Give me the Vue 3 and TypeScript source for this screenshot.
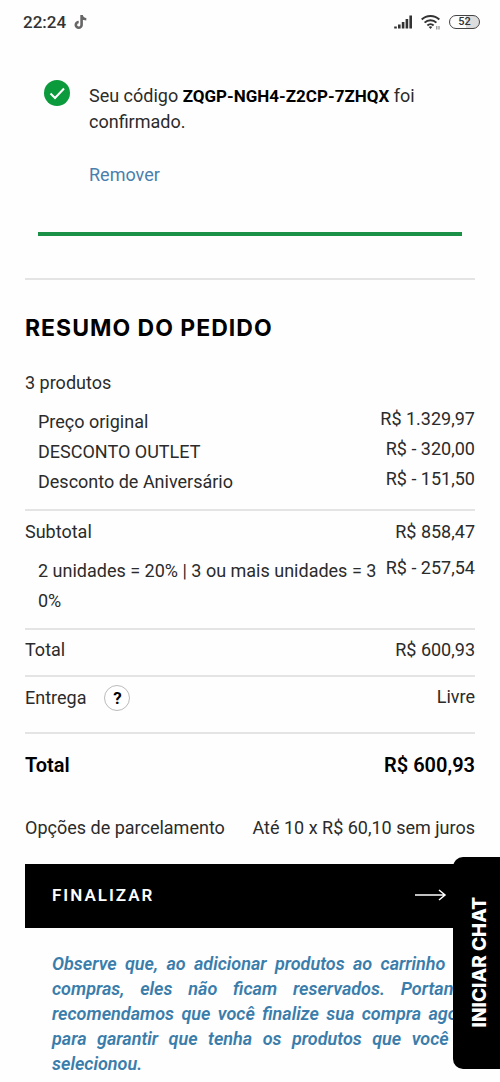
<script setup lang="ts">
interface SummaryRow {
  label: string
  value: string
}

const voucherCode = 'ZQGP-NGH4-Z2CP-7ZHQX'

const prices: SummaryRow[] = [
  { label: 'Preço original', value: 'R$ 1.329,97' },
  { label: 'DESCONTO OUTLET', value: 'R$ - 320,00' },
  { label: 'Desconto de Aniversário', value: 'R$ - 151,50' },
]

const noteLines: string[] = [
  'Observe que, ao adicionar produtos ao carrinho de',
  'compras, eles não ficam reservados. Portanto,',
  'recomendamos que você finalize sua compra agora',
  'para garantir que tenha os produtos que você já',
  'selecionou.',
]
</script>

<template>
  <div class="page">
    <header class="status">
      <div class="status-side">
        <span class="clock">22:24</span>
        <svg class="note-icon" viewBox="0 0 14 16" aria-hidden="true">
          <path d="M7.6 1v9.9a2.9 2.9 0 1 1-2.9-2.9M7.6 1.2c.3 2.300 2 3.900 4.700 4" fill="none" stroke="#666" stroke-width="2.600" />
        </svg>
      </div>
      <div class="status-side">
        <svg class="signal-icon" viewBox="0 0 20 14" aria-hidden="true">
          <path d="M2.500 11.500v2M6.300 9.500v4M10.100 7v6.500M13.900 4v9.500M17.700 .5v13" fill="none" stroke="#333" stroke-width="2.600" />
        </svg>
        <svg class="wifi-icon" viewBox="0 0 20 16" aria-hidden="true">
          <g fill="none" stroke="#333" stroke-width="2">
            <path d="M.7 5.500a12.500 12.500 0 0 1 17.600 0" />
            <path d="M3.600 8.600a8.500 8.500 0 0 1 11.800 0" />
            <path d="M6.400 11.500a4.500 4.500 0 0 1 6.200 0" />
          </g>
          <path d="M7.800 13l1.700 2 1.700-2a2.500 2.500 0 0 0-3.400 0z" fill="#333" />
          <path d="M15.800 12v3.500M18 15.500v-3.500" fill="none" stroke="#777" />
        </svg>
        <span class="battery">52</span>
      </div>
    </header>

    <main class="content">
      <section class="notice">
        <svg class="check-icon" viewBox="0 0 26 26" aria-hidden="true">
          <circle cx="13" cy="13" r="13" fill="#0b9a3c" />
          <path d="M6.500 13.500l4.500 4.500 9-9.500" fill="none" stroke="#fff" stroke-width="2" />
        </svg>
        <div class="notice-body">
          <p class="notice-text">Seu código <strong>{{ voucherCode }}</strong> foi confirmado.</p>
          <a class="remove" href="#">Remover</a>
        </div>
      </section>

      <section class="summary">
        <h1 class="title">RESUMO DO PEDIDO</h1>
        <p class="count">3 produtos</p>

        <dl class="group prices">
          <div v-for="row in prices" :key="row.label" class="row nested">
            <dt>{{ row.label }}</dt>
            <dd>{{ row.value }}</dd>
          </div>
        </dl>

        <dl class="group subtotal">
          <div class="row">
            <dt>Subtotal</dt>
            <dd>R$ 858,47</dd>
          </div>
          <div class="row nested">
            <dt>2 unidades = 20% | 3 ou mais unidades = 3<br>0%</dt>
            <dd>R$ - 257,54</dd>
          </div>
        </dl>

        <dl class="group partial">
          <div class="row">
            <dt>Total</dt>
            <dd>R$ 600,93</dd>
          </div>
        </dl>

        <dl class="group delivery">
          <div class="row">
            <dt class="delivery-label">
              Entrega
              <button class="help" type="button" aria-label="Ajuda sobre a entrega">?</button>
            </dt>
            <dd>Livre</dd>
          </div>
        </dl>

        <dl class="group final">
          <div class="row grand">
            <dt>Total</dt>
            <dd>R$ 600,93</dd>
          </div>
          <div class="row">
            <dt>Opções de parcelamento</dt>
            <dd>Até 10 x R$ 60,10 sem juros</dd>
          </div>
        </dl>
      </section>

      <button class="checkout" type="button">
        <span>FINALIZAR</span>
        <svg class="arrow" viewBox="0 0 32 12" aria-hidden="true">
          <path d="M0 6h30M24 1l6 5-6 5" fill="none" stroke="#fff" stroke-width="1.500" />
        </svg>
      </button>

      <p class="reserve-note">
        <span v-for="line in noteLines" :key="line" class="note-line">{{ line }}</span>
      </p>
    </main>

    <button class="chat" type="button"><span class="chat-label">INICIAR CHAT</span></button>
  </div>
</template>

<style>
body {
  background: #fefefe;
}
</style>

<style scoped>
.page {
  font-family: Roboto, "Liberation Sans", sans-serif;
  font-size: 18px;
  line-height: 24px;
  color: #2b2b2b;
  overflow-x: hidden;
}

p,
h1,
dl,
dd {
  margin: 0;
}

button {
  font-family: inherit;
  border: 0;
  padding: 0;
  cursor: pointer;
}

.status {
  display: flex;
  justify-content: space-between;
  align-items: center;
  height: 44px;
  padding: 0 20px 0 23px;
}

.status-side {
  display: flex;
  align-items: center;
  gap: 8px;
}

.clock {
  font-size: 17px;
  font-weight: 500;
  color: #333;
}

.note-icon {
  width: 14px;
  height: 16px;
}

.signal-icon {
  width: 20px;
  height: 14px;
}

.wifi-icon {
  width: 20px;
  height: 16px;
}

.battery {
  box-sizing: border-box;
  width: 31px;
  height: 14px;
  border: 1px solid #444;
  border-radius: 7px;
  background: linear-gradient(90deg, #fefefe 55%, #ddd 55%);
  color: #333;
  font-size: 11px;
  font-weight: 500;
  line-height: 12px;
  text-align: center;
}

.content {
  padding: 0 25px;
}

.notice {
  display: flex;
  align-items: flex-start;
  gap: 19px;
  margin: 36px 13px 42px;
  padding: 0 6px 45px;
  border-bottom: 4px solid #1b9148;
}

.check-icon {
  flex: none;
  width: 26px;
  height: 26px;
}

.notice-body {
  padding-top: 3px;
  line-height: 25px;
}

.notice-text strong {
  font-size: 17px;
  color: #000;
}

.remove {
  display: inline-block;
  margin-top: 28px;
  color: #4a7fad;
  text-decoration: none;
}

.summary {
  border-top: 2px solid #e4e4e4;
  padding-top: 33px;
}

.title {
  font-family: Inter, "Liberation Sans", sans-serif;
  font-size: 23px;
  font-weight: 700;
  line-height: 30px;
  letter-spacing: 1px;
  color: #000;
}

.count {
  margin-top: 28px;
}

.row {
  display: flex;
  justify-content: space-between;
  gap: 8px;
}

.row dd {
  white-space: nowrap;
}

.nested {
  padding-left: 13px;
}

.nested dt {
  line-height: 30px;
}

.group + .group {
  border-top: 2px solid #e4e4e4;
}

.prices {
  padding: 12px 0;
}

.subtotal {
  display: flex;
  flex-direction: column;
  gap: 12px;
  padding: 9px 0 12px;
}

.partial {
  padding: 8px 0 13px;
}

.delivery {
  padding: 8px 0 21px;
}

.delivery-label {
  display: flex;
  align-items: center;
  gap: 18px;
}

.help {
  box-sizing: border-box;
  width: 26px;
  height: 26px;
  border: 1px solid #bbb;
  border-radius: 50%;
  background: #fff;
  color: #000;
  font-size: 17px;
  font-weight: 700;
  line-height: 24px;
}

.final {
  display: flex;
  flex-direction: column;
  gap: 39px;
  padding: 19px 0 24px;
}

.grand {
  font-size: 20px;
  font-weight: 600;
  color: #000;
}

.checkout {
  display: flex;
  justify-content: space-between;
  align-items: center;
  width: 100%;
  height: 64px;
  padding: 0 28px 3px 27px;
  background: #000;
  color: #fff;
  font-size: 17px;
  font-weight: 600;
  letter-spacing: 2px;
}

.arrow {
  width: 32px;
  height: 12px;
}

.reserve-note {
  padding: 23px 2px 6px 27px;
  color: #3a7dab;
  font-weight: 600;
  font-style: italic;
  line-height: 25px;
}

.note-line {
  display: block;
  text-align-last: justify;
}

.note-line:last-child {
  text-align-last: left;
}

.chat {
  position: fixed;
  right: 0;
  bottom: 13px;
  width: 47px;
  height: 212px;
  padding: 2px 0 0 5px;
  border-radius: 10px 0 0 10px;
  background: #000;
  color: #fff;
}

.chat-label {
  display: inline-block;
  writing-mode: vertical-rl;
  transform: rotate(180deg);
  font-family: Inter, "Liberation Sans", sans-serif;
  font-size: 19px;
  font-weight: 800;
}
</style>
